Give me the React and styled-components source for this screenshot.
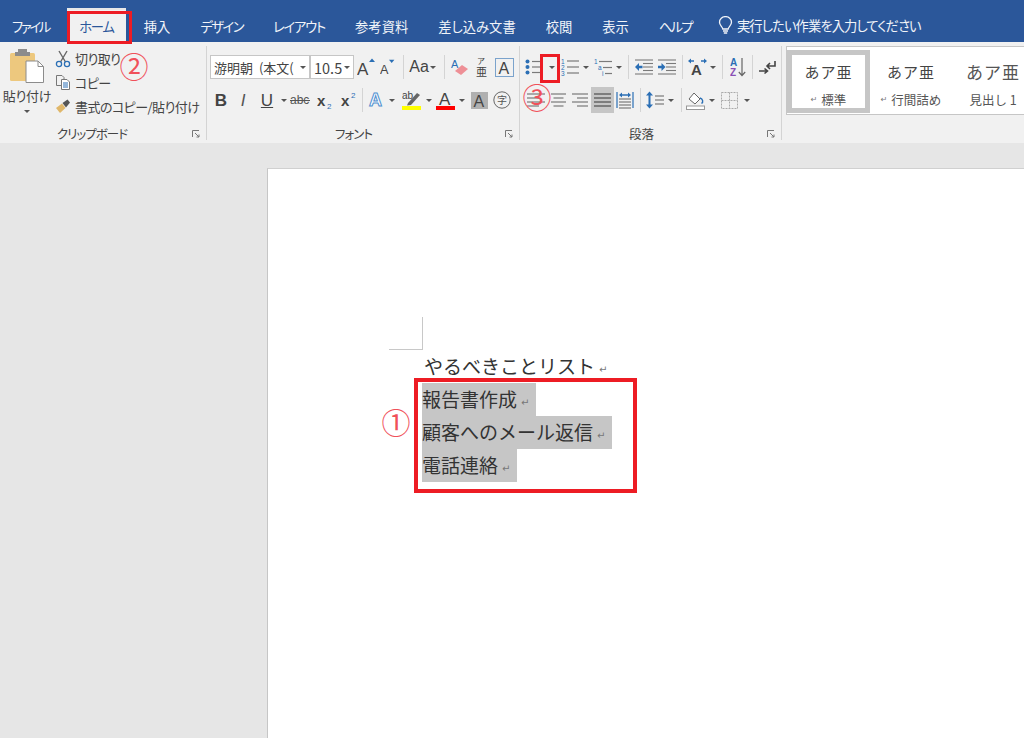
import React from 'react';
import styled, { createGlobalStyle } from 'styled-components';

const GlobalStyle = createGlobalStyle`
  html, body {
    margin: 0;
    padding: 0;
    background: #e6e6e6;
  }
  body {
    font-family: "Noto Sans CJK JP", "Liberation Sans", sans-serif;
    color: #444;
  }
`;

const Blue = '#2b6fb5';
const Grey = '#7a7a7a';

const Screen = styled.div`
  position: relative;
  width: 1024px;
  height: 738px;
  overflow: hidden;
  display: flex;
  flex-direction: column;
  background: #e6e6e6;
`;

/* title tabs */
const TabBar = styled.div`
  height: 42px;
  flex: none;
  display: flex;
  align-items: flex-end;
  gap: 6px;
  background: #2b579a;
`;

const Tab = styled.div`
  height: 34px;
  box-sizing: border-box;
  padding: 0 12px;
  display: flex;
  align-items: center;
  font-size: 13.3px;
  font-feature-settings: "palt";
  letter-spacing: ${p => p.$tight || 0}px;
  white-space: nowrap;
  color: ${p => (p.$active ? '#2b579a' : '#f1f4f9')};
  background: ${p => (p.$active ? '#f1f1f1' : 'transparent')};
  border-top: 2px solid ${p => (p.$active ? '#e8e8e8' : 'transparent')};
`;

const TellMe = styled.div`
  height: 34px;
  margin-left: 8px;
  display: flex;
  align-items: center;
  gap: 4px;
  font-size: 13.3px;
  font-feature-settings: "palt";
  letter-spacing: -0.9px;
  color: #f1f4f9;
  white-space: nowrap;
`;

/* ribbon */
const Ribbon = styled.div`
  height: 101px;
  flex: none;
  display: flex;
  background: #f1f1f1;
  overflow: hidden;
`;

const Group = styled.div`
  position: relative;
  width: ${p => p.$w}px;
  flex: none;
  box-sizing: border-box;
  padding-left: ${p => p.$pad || 0}px;
  display: flex;
  flex-direction: column;
`;

const GroupLine = styled.div`
  width: 1px;
  flex: none;
  margin: 4px 0 3px;
  background: #d4d4d4;
`;

const GroupBody = styled.div`
  height: 76px;
  padding-top: 12px;
  box-sizing: border-box;
  display: flex;
  flex-direction: column;
  gap: 7px;
`;

const GroupLabel = styled.div`
  height: 16px;
  margin-top: 8px;
  padding-right: 22px;
  text-align: center;
  font-size: 12.5px;
  line-height: 16px;
  font-feature-settings: "palt";
  letter-spacing: ${p => p.$tight || 0}px;
  color: #444;
`;

const Launcher = styled.svg`
  position: absolute;
  right: 6px;
  bottom: 5px;
  width: 8px;
  height: 8px;
`;

const Row = styled.div`
  height: 26px;
  display: flex;
  align-items: center;
`;

const Slot = styled.div`
  width: ${p => p.$w}px;
  height: ${p => (p.$on ? 26 : 22)}px;
  flex: none;
  display: flex;
  align-items: center;
  justify-content: center;
  background: ${p => (p.$on ? '#c6c6c6' : 'transparent')};
`;

const Sep = styled.div`
  width: ${p => p.$w}px;
  height: 24px;
  flex: none;
  display: flex;
  justify-content: center;
  &::before {
    content: '';
    width: 1px;
    background: #d4d4d4;
  }
`;

const Caret = styled.span`
  width: 0;
  height: 0;
  flex: none;
  border-left: 3px solid transparent;
  border-right: 3px solid transparent;
  border-top: 3px solid #555;
`;

const CaretSlot = ({ w }) => (
  <Slot $w={w}>
    <Caret />
  </Slot>
);

const Combo = styled.div`
  width: ${p => p.$w}px;
  height: 24px;
  box-sizing: border-box;
  flex: none;
  display: flex;
  align-items: center;
  padding: 0 3px;
  gap: 2px;
  background: #fff;
  border: 1px solid #c6c6c6;
`;

const ComboText = styled.span`
  flex: 1;
  overflow: hidden;
  white-space: nowrap;
  font-size: ${p => p.$size || 13}px;
  word-spacing: 3px;
  color: #444;
`;

const Letter = styled.span`
  font-family: "Liberation Sans", sans-serif;
  font-size: ${p => p.$size || 16}px;
  font-weight: ${p => (p.$bold ? 700 : 400)};
  font-style: ${p => (p.$italic ? 'italic' : 'normal')};
  text-decoration: ${p => p.$deco || 'none'};
  color: ${p => p.$color || '#444'};
  line-height: 1;
`;

/* clipboard */
const ClipBody = styled.div`
  display: flex;
  height: 76px;
`;

const PasteButton = styled.div`
  width: 54px;
  flex: none;
  padding-top: 6px;
  display: flex;
  flex-direction: column;
  align-items: center;
  font-size: 13px;
  font-feature-settings: "palt";
  letter-spacing: -0.3px;
  white-space: nowrap;
  color: #444;
`;

const PasteLabel = styled.div`
  margin-top: 3px;
  line-height: 17px;
`;

const PasteCaret = styled(Caret)`
  margin-top: 6px;
`;

const ClipList = styled.div`
  padding-top: 5px;
  padding-left: 1px;
  display: flex;
  flex-direction: column;
`;

const ClipItem = styled.div`
  height: 25px;
  display: flex;
  align-items: center;
  gap: 4px;
  font-size: 13px;
  font-feature-settings: "palt";
  letter-spacing: -0.55px;
  white-space: nowrap;
  color: #444;
`;

/* styles gallery */
const Gallery = styled.div`
  margin: 4px 0 0 4px;
  width: 260px;
  height: 69px;
  box-sizing: border-box;
  display: flex;
  align-items: center;
  padding-top: 1px;
  background: #fff;
  border: 1px solid #c6c6c6;
`;

const StyleCard = styled.div`
  width: ${p => (p.$on ? 83 : 82)}px;
  height: 63px;
  flex: none;
  box-sizing: border-box;
  padding-top: ${p => (p.$on ? 6 : 11)}px;
  display: flex;
  flex-direction: column;
  align-items: center;
  gap: 9px;
  border: ${p => (p.$on ? '5px solid #c6c6c6' : 'none')};
`;

const StyleSample = styled.div`
  font-size: ${p => p.$size}px;
  line-height: 22px;
  letter-spacing: 1px;
  color: ${p => p.$color || '#444'};
`;

const StyleName = styled.div`
  display: flex;
  align-items: center;
  gap: 4px;
  font-size: 12.5px;
  line-height: 16px;
  color: #555;
`;

const MiniReturn = styled.span`
  font-family: "DejaVu Sans", sans-serif;
  font-size: 8px;
  color: #777;
`;

/* document area */
const Workspace = styled.div`
  flex: 1;
  display: flex;
  padding: 25px 0 0 267px;
  min-height: 0;
`;

const Page = styled.div`
  position: relative;
  flex: 1;
  box-sizing: border-box;
  padding: 181px 0 0 154px;
  background: #fff;
  border-left: 1px solid #c6c6c6;
  border-top: 1px solid #d0d0d0;
  &::before {
    content: '';
    position: absolute;
    left: 121px;
    top: 148px;
    width: 33px;
    height: 32px;
    border-right: 1px solid #c8c8c8;
    border-bottom: 1px solid #c8c8c8;
  }
`;

const Line = styled.div`
  width: fit-content;
  height: 33px;
  box-sizing: border-box;
  display: flex;
  align-items: center;
  padding-left: ${p => p.$indent || 0}px;
  padding-bottom: 2px;
  font-size: 19px;
  line-height: 31px;
  color: #333;
  white-space: nowrap;
  background: ${p => (p.$selected ? '#c6c6c6' : 'transparent')};
`;

const ReturnMark = styled.span`
  width: 19px;
  flex: none;
  padding-left: 4px;
  box-sizing: border-box;
  font-family: "DejaVu Sans", sans-serif;
  font-size: 10px;
  line-height: 10px;
  margin-top: 8px;
  color: #777;
`;

/* annotations */
const RedBox = styled.div`
  position: absolute;
  left: ${p => p.$x}px;
  top: ${p => p.$y}px;
  width: ${p => p.$w}px;
  height: ${p => p.$h}px;
  box-sizing: border-box;
  border: ${p => p.$t}px solid #ed1c24;
`;

const Badge = styled.div`
  position: absolute;
  left: ${p => p.$x}px;
  top: ${p => p.$y}px;
  width: 30px;
  height: 30px;
  transform: translate(-50%, -50%);
  display: flex;
  align-items: center;
  justify-content: center;
  font-size: 29px;
  line-height: 30px;
  color: #f0505a;
`;

/* icons */
const Bars = ({ rows, w = 18, h = 16, color = Grey, weight = 1.2 }) => (
  <svg width={w} height={h} viewBox={`0 0 ${w} ${h}`}>
    {rows.map(([x1, x2, y], i) => (
      <line key={i} x1={x1} x2={x2} y1={y} y2={y} stroke={color} strokeWidth={weight} />
    ))}
  </svg>
);

const Bulb = () => (
  <svg width="15" height="19" viewBox="0 0 15 19" fill="none" stroke="#f1f4f9" strokeWidth="1.3">
    <path d="M4.8 13 C4.6 10.6 1.5 9.6 1.5 6.2 A6 5.6 0 0 1 13.5 6.2 C13.5 9.6 10.4 10.6 10.2 13 Z" />
    <path d="M5 15 H10 M5.8 17 H9.2" />
  </svg>
);

const Launch = () => (
  <Launcher viewBox="0 0 8 8" fill="none" stroke="#777" strokeWidth="1">
    <path d="M0.5 7 V0.5 H7" />
    <path d="M3 3 L7 7 M7 4.5 V7 H4.5" />
  </Launcher>
);

const PasteIcon = () => (
  <svg width="36" height="36" viewBox="0 0 36 36">
    <rect x="1" y="5" width="25" height="28" rx="1.5" fill="#edc87e" />
    <rect x="9" y="1" width="9" height="4" fill="#8c8c8c" />
    <rect x="6" y="4" width="15" height="4" fill="#8c8c8c" />
    <path d="M17 13 H29 L34.5 18.5 V34.5 H17 Z" fill="#fff" stroke="#8c8c8c" />
    <path d="M29 13 V18.5 H34.5" fill="none" stroke="#8c8c8c" />
  </svg>
);

const ScissorsIcon = () => (
  <svg width="16" height="18" viewBox="0 0 16 18" fill="none">
    <path d="M4 1 L10.5 12 M12 1 L5.5 12" stroke="#666" strokeWidth="1.4" />
    <circle cx="4" cy="14" r="2.6" stroke={Blue} strokeWidth="1.3" />
    <circle cx="12" cy="14" r="2.6" stroke={Blue} strokeWidth="1.3" />
  </svg>
);

const CopyIcon = () => (
  <svg width="16" height="17" viewBox="0 0 16 17" fill="none" stroke="#777">
    <path d="M1.5 1.5 H7 L9 3.5 V11.5 H1.5 Z" fill="#f1f1f1" />
    <path d="M6.5 5.5 H12 L14.5 8 V15.5 H6.5 Z" fill="#fff" />
    <path d="M8 9 H13 M8 11 H13 M8 13 H13" stroke={Blue} />
  </svg>
);

const BrushIcon = () => (
  <svg width="16" height="15" viewBox="0 0 16 15">
    <path d="M1 9 L7 4.5 L10.5 9 L5 14 Z" fill="#e0b76a" />
    <path d="M7.5 4 L12.5 0.5 L15 3.5 L11 8.5 Z" fill="#555" />
  </svg>
);

const GrowIcon = ({ up }) => (
  <svg width="20" height="18" viewBox="0 0 20 18">
    <text x="0" y="17" fontFamily="Liberation Sans" fontSize={up ? 17 : 14} fill="#444">A</text>
    <path d={up ? 'M12 4 L15 0.5 L18 4 Z' : 'M10 1 L16 1 L13 4.5 Z'} fill={Blue} />
  </svg>
);

const EraserIcon = () => (
  <svg width="18" height="18" viewBox="0 0 18 18">
    <text x="0" y="10" fontFamily="Liberation Sans" fontSize="11" fill={Blue}>A</text>
    <path d="M4 13 L11 7 L17 11 L10 17 Z" fill="#ee8f96" />
  </svg>
);

const RubyIcon = () => (
  <svg width="14" height="22" viewBox="0 0 14 22">
    <text x="2" y="8" fontFamily="Noto Sans CJK JP" fontSize="8" fill="#444">ア</text>
    <text x="1" y="20" fontFamily="Noto Sans CJK JP" fontSize="11" fill="#444">亜</text>
  </svg>
);

const BoxedA = () => (
  <svg width="19" height="19" viewBox="0 0 19 19">
    <rect x="0.5" y="0.5" width="18" height="18" fill="none" stroke="#7ba3cc" />
    <text x="3.5" y="15.5" fontFamily="Liberation Sans" fontSize="16" fill="#444">A</text>
  </svg>
);

const Strike = () => (
  <svg width="20" height="14" viewBox="0 0 20 14">
    <text x="0" y="11" fontFamily="Liberation Sans" fontSize="12" fill="#555">abc</text>
    <line x1="0" x2="20" y1="7.5" y2="7.5" stroke="#555" />
  </svg>
);

const ScriptIcon = ({ sup }) => (
  <svg width="17" height="21" viewBox="0 0 17 21">
    <text x="0" y="16" fontFamily="Liberation Sans" fontWeight="700" fontSize="15" fill="#444">x</text>
    <text x="10" y={sup ? 8 : 19} fontFamily="Liberation Sans" fontSize="8" fill={Blue}>2</text>
  </svg>
);

const GlowA = () => (
  <svg width="18" height="20" viewBox="0 0 18 20">
    <text x="2" y="16" fontFamily="Liberation Sans" fontWeight="700" fontSize="18" fill="#fff" stroke="#4f8fd0" strokeWidth="1">A</text>
  </svg>
);

const MarkerIcon = () => (
  <svg width="19" height="20" viewBox="0 0 19 20">
    <text x="0" y="9" fontFamily="Liberation Sans" fontSize="10" fill="#444">ab</text>
    <path d="M6 13 L15 3 L18 5 L9 15 L5 15.5 Z" fill="#666" />
    <rect x="0" y="16" width="19" height="4" fill="#ffff00" />
  </svg>
);

const ColorA = () => (
  <svg width="19" height="20" viewBox="0 0 19 20">
    <text x="3" y="14.5" fontFamily="Liberation Sans" fontSize="17" fill="#444">A</text>
    <rect x="0" y="16" width="19" height="4" fill="#f00" />
  </svg>
);

const ShadeA = () => (
  <svg width="17" height="17" viewBox="0 0 17 17">
    <rect width="17" height="17" fill="#b0b0b0" />
    <text x="2.5" y="15" fontFamily="Liberation Sans" fontSize="16" fill="#444">A</text>
  </svg>
);

const EnclosedChar = () => (
  <svg width="18" height="18" viewBox="0 0 18 18">
    <circle cx="9" cy="9" r="8.2" fill="none" stroke="#666" />
    <text x="4" y="13" fontFamily="Noto Sans CJK JP" fontSize="10" fill="#555">字</text>
  </svg>
);

const BulletIcon = () => (
  <svg width="18" height="16" viewBox="0 0 18 16">
    {[2.5, 8, 13.5].map(y => (
      <g key={y}>
        <circle cx="2.5" cy={y} r="2" fill={Blue} />
        <line x1="7" x2="18" y1={y} y2={y} stroke={Grey} strokeWidth="1.2" />
      </g>
    ))}
  </svg>
);

const NumberIcon = () => (
  <svg width="18" height="18" viewBox="0 0 18 18">
    {[['1', 5.5], ['2', 11.5], ['3', 17.5]].map(([n, y]) => (
      <g key={n}>
        <text x="0" y={y} fontFamily="Liberation Sans" fontSize="6.5" fill={Blue}>{n}</text>
        <line x1="6" x2="18" y1={y - 2.5} y2={y - 2.5} stroke={Grey} strokeWidth="1.2" />
      </g>
    ))}
  </svg>
);

const MultiIcon = () => (
  <svg width="18" height="18" viewBox="0 0 18 18">
    <text x="0" y="6" fontFamily="Liberation Sans" fontSize="6.5" fill={Blue}>1</text>
    <line x1="5" x2="18" y1="3.5" y2="3.5" stroke={Grey} strokeWidth="1.2" />
    <text x="4" y="12" fontFamily="Liberation Sans" fontSize="6.5" fill={Blue}>a</text>
    <line x1="9" x2="18" y1="9.5" y2="9.5" stroke={Grey} strokeWidth="1.2" />
    <text x="8" y="18" fontFamily="Liberation Sans" fontSize="6.5" fill={Blue}>i</text>
    <line x1="11" x2="18" y1="15.5" y2="15.5" stroke={Grey} strokeWidth="1.2" />
  </svg>
);

const IndentIcon = ({ more }) => (
  <svg width="18" height="16" viewBox="0 0 18 16">
    {[1, 4.5, 8, 11.5, 15].map(y => (
      <line key={y} x1={y === 1 || y === 15 ? 0 : 8} x2="18" y1={y} y2={y} stroke={Grey} strokeWidth="1.1" />
    ))}
    <path d={more ? 'M0 6.8 H3.5 V4 L7.5 8 L3.5 12 V9.2 H0 Z' : 'M7.5 6.8 H4 V4 L0 8 L4 12 V9.2 H7.5 Z'} fill={Blue} />
  </svg>
);

const DirectionIcon = () => (
  <svg width="19" height="18" viewBox="0 0 19 18">
    <text x="3" y="16.5" fontFamily="Liberation Sans" fontWeight="700" fontSize="15" fill="#444">A</text>
    <path d="M0 3 L3 0.5 V2.2 H6 V3.8 H3 V5.5 Z M19 3 L16 0.5 V2.2 H13 V3.8 H16 V5.5 Z" fill={Blue} />
  </svg>
);

const SortIcon = () => (
  <svg width="16" height="21" viewBox="0 0 16 21">
    <text x="0" y="9" fontFamily="Liberation Sans" fontWeight="700" fontSize="10" fill={Blue}>A</text>
    <text x="0" y="19" fontFamily="Liberation Sans" fontWeight="700" fontSize="10" fill="#8a4fb5">Z</text>
    <path d="M12 1 V18 M8.8 15 L12 18.5 L15.2 15" fill="none" stroke="#666" strokeWidth="1.2" />
  </svg>
);

const PilcrowIcon = () => (
  <svg width="17" height="15" viewBox="0 0 17 15" fill="none" stroke="#444" strokeWidth="1.6">
    <path d="M16 1 V6 H8 M11 3 L8 6 L11 9" />
    <path d="M0 11 H8 M5.5 8.5 L8.5 11 L5.5 13.5" />
  </svg>
);

const DistIcon = () => (
  <svg width="18" height="18" viewBox="0 0 18 18">
    {[1, 17].map(x => (
      <line key={x} x1={x} x2={x} y1="1" y2="17" stroke={Blue} strokeWidth="1.2" />
    ))}
    {[8, 11, 14, 17].map(y => (
      <line key={y} x1="3" x2="15" y1={y} y2={y} stroke={Grey} strokeWidth="1.2" />
    ))}
    <path d="M3 4 L6 1.5 V3.3 H12 V1.5 L15 4 L12 6.5 V4.7 H6 V6.5 Z" fill={Blue} />
  </svg>
);

const SpacingIcon = () => (
  <svg width="18" height="18" viewBox="0 0 18 18">
    <path d="M3.5 0.5 L7 4.5 H4.5 V13.5 H7 L3.5 17.5 L0 13.5 H2.5 V4.5 H0 Z" fill={Blue} />
    {[5, 9, 13].map(y => (
      <line key={y} x1="9" x2="18" y1={y} y2={y} stroke={Grey} strokeWidth="1.2" />
    ))}
  </svg>
);

const BucketIcon = () => (
  <svg width="19" height="19" viewBox="0 0 19 19">
    <path d="M3 8 L8 2 L14 8 L9 13 Z" fill="#fff" stroke="#666" />
    <path d="M14 7 C17 8 17.5 11 15.5 12.5" fill="none" stroke={Blue} strokeWidth="1.4" />
    <rect x="0.5" y="15" width="18" height="3.5" fill="#fff" stroke="#999" />
  </svg>
);

const BorderIcon = () => (
  <svg width="17" height="17" viewBox="0 0 17 17" fill="none" stroke="#aaa" strokeDasharray="2 1">
    <rect x="0.5" y="0.5" width="16" height="16" />
    <path d="M8.5 0.5 V16.5 M0.5 8.5 H16.5" />
  </svg>
);

const tabs = [
  { name: 'ファイル', tight: -2.2 },
  { name: 'ホーム', tight: -1.2 },
  { name: '挿入' },
  { name: 'デザイン', tight: -1.5 },
  { name: 'レイアウト', tight: -1.2 },
  { name: '参考資料' },
  { name: '差し込み文書' },
  { name: '校閲' },
  { name: '表示' },
  { name: 'ヘルプ', tight: -1.7 }
];

export default function App() {
  return (
    <Screen>
      <GlobalStyle />
      <TabBar>
        {tabs.map(t => (
          <Tab key={t.name} $active={t.name === 'ホーム'} $tight={t.tight}>{t.name}</Tab>
        ))}
        <TellMe>
          <Bulb />
          実行したい作業を入力してください
        </TellMe>
      </TabBar>

      <Ribbon>
        <Group $w={206}>
          <ClipBody>
            <PasteButton>
              <PasteIcon />
              <PasteLabel>貼り付け</PasteLabel>
              <PasteCaret />
            </PasteButton>
            <ClipList>
              <ClipItem><ScissorsIcon />切り取り</ClipItem>
              <ClipItem><CopyIcon />コピー</ClipItem>
              <ClipItem><BrushIcon />書式のコピー/貼り付け</ClipItem>
            </ClipList>
          </ClipBody>
          <GroupLabel $tight={-1}>クリップボード</GroupLabel>
          <Launch />
        </Group>
        <GroupLine />

        <Group $w={312} $pad={3}>
          <GroupBody>
            <Row>
              <Combo $w={100}>
                <ComboText>游明朝 (本文(</ComboText>
                <Caret />
              </Combo>
              <Combo $w={44}>
                <ComboText $size={14.5}>10.5</ComboText>
                <Caret />
              </Combo>
              <Slot $w={26}><GrowIcon up /></Slot>
              <Slot $w={18}><GrowIcon /></Slot>
              <Sep $w={11} />
              <Slot $w={20}><Letter $size={16}>Aa</Letter></Slot>
              <CaretSlot w={8} />
              <Sep $w={14} />
              <Slot $w={18}><EraserIcon /></Slot>
              <Slot $w={26}><RubyIcon /></Slot>
              <Slot $w={19}><BoxedA /></Slot>
            </Row>
            <Row>
              <Slot $w={22}><Letter $bold $size={17}>B</Letter></Slot>
              <Slot $w={22}><Letter $italic $size={17} $color="#555">I</Letter></Slot>
              <Slot $w={26}><Letter $size={17} $deco="underline">U</Letter></Slot>
              <CaretSlot w={8} />
              <Slot $w={24}><Strike /></Slot>
              <Slot $w={26}><ScriptIcon /></Slot>
              <Slot $w={22}><ScriptIcon sup /></Slot>
              <Sep $w={4} />
              <Slot $w={24}><GlowA /></Slot>
              <CaretSlot w={8} />
              <Slot $w={30}><MarkerIcon /></Slot>
              <CaretSlot w={6} />
              <Slot $w={26}><ColorA /></Slot>
              <CaretSlot w={8} />
              <Slot $w={26}><ShadeA /></Slot>
              <Slot $w={20}><EnclosedChar /></Slot>
            </Row>
          </GroupBody>
          <GroupLabel $tight={-1}>フォント</GroupLabel>
          <Launch />
        </Group>
        <GroupLine />

        <Group $w={261} $pad={4}>
          <GroupBody>
            <Row>
              <Slot $w={20}><BulletIcon /></Slot>
              <CaretSlot w={16} />
              <Slot $w={20}><NumberIcon /></Slot>
              <CaretSlot w={12} />
              <Slot $w={22}><MultiIcon /></Slot>
              <CaretSlot w={10} />
              <Sep $w={8} />
              <Slot $w={23}><IndentIcon /></Slot>
              <Slot $w={23}><IndentIcon more /></Slot>
              <Sep $w={8} />
              <Slot $w={22}><DirectionIcon /></Slot>
              <CaretSlot w={10} />
              <Sep $w={8} />
              <Slot $w={24}><SortIcon /></Slot>
              <Sep $w={4} />
              <Slot $w={26}><PilcrowIcon /></Slot>
            </Row>
            <Row>
              <Slot $w={24}><Bars rows={[[0, 18, 2], [0, 12, 6], [0, 18, 10], [0, 12, 14]]} /></Slot>
              <Slot $w={21}><Bars w={15} rows={[[0, 15, 2], [2.5, 12.5, 6], [0, 15, 10], [2.5, 12.5, 14]]} /></Slot>
              <Slot $w={22}><Bars w={16} rows={[[0, 16, 2], [5, 16, 6], [0, 16, 10], [5, 16, 14]]} /></Slot>
              <Slot $w={23} $on><Bars w={17} color="#666" weight={1.5} rows={[[0, 17, 2], [0, 17, 6], [0, 17, 10], [0, 17, 14]]} /></Slot>
              <Slot $w={22}><DistIcon /></Slot>
              <Sep $w={8} />
              <Slot $w={22}><SpacingIcon /></Slot>
              <CaretSlot w={10} />
              <Sep $w={10} />
              <Slot $w={19}><BucketIcon /></Slot>
              <CaretSlot w={14} />
              <Slot $w={21}><BorderIcon /></Slot>
              <CaretSlot w={14} />
            </Row>
          </GroupBody>
          <GroupLabel>段落</GroupLabel>
          <Launch />
        </Group>
        <GroupLine />

        <Gallery>
          <StyleCard $on>
            <StyleSample $size={15}>あア亜</StyleSample>
            <StyleName><MiniReturn>↵</MiniReturn>標準</StyleName>
          </StyleCard>
          <StyleCard>
            <StyleSample $size={15}>あア亜</StyleSample>
            <StyleName><MiniReturn>↵</MiniReturn>行間詰め</StyleName>
          </StyleCard>
          <StyleCard>
            <StyleSample $size={17} $color="#555">あア亜</StyleSample>
            <StyleName>見出し 1</StyleName>
          </StyleCard>
        </Gallery>
      </Ribbon>

      <Workspace>
        <Page>
          <Line $indent={2}>やるべきことリスト<ReturnMark>↵</ReturnMark></Line>
          <Line $selected>報告書作成<ReturnMark>↵</ReturnMark></Line>
          <Line $selected>顧客へのメール返信<ReturnMark>↵</ReturnMark></Line>
          <Line $selected>電話連絡<ReturnMark>↵</ReturnMark></Line>
        </Page>
      </Workspace>

      <RedBox $x={67} $y={11} $w={65} $h={33} $t={3.5} />
      <RedBox $x={540} $y={54} $w={20} $h={29} $t={3.5} />
      <RedBox $x={414} $y={378} $w={223} $h={115} $t={4} />
      <Badge $x={134} $y={65}>②</Badge>
      <Badge $x={537} $y={96}>③</Badge>
      <Badge $x={396} $y={421}>①</Badge>
    </Screen>
  );
}
